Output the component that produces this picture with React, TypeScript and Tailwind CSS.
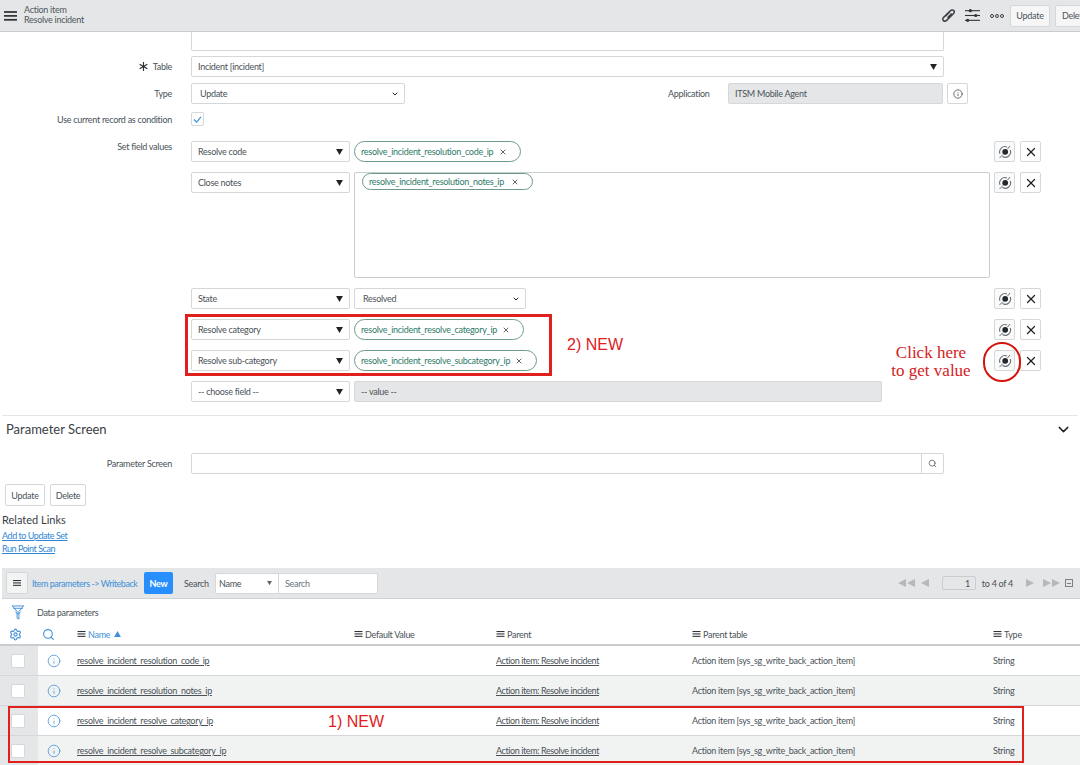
import React from "react";
import { ChevronDown, Info, Search, Settings, X } from "lucide-react";

const rows = [
  { name: "resolve_incident_resolution_code_ip", shade: false },
  { name: "resolve_incident_resolution_notes_ip", shade: true },
  { name: "resolve_incident_resolve_category_ip", shade: false },
  { name: "resolve_incident_resolve_subcategory_ip", shade: true },
];

const Burger = ({ className }: { className: string }) => (
  <svg viewBox="0 0 12 9" className={className} fill="currentColor">
    <rect width="12" height="1.6" />
    <rect y="3.6" width="12" height="1.6" />
    <rect y="7.2" width="12" height="1.6" />
  </svg>
);

const Caret = ({ className = "" }: { className?: string }) => (
  <svg viewBox="0 0 8 7" className={`w-[7px] h-[6px] text-[#222] ${className}`} fill="currentColor">
    <path d="M0 0h8L4 7z" />
  </svg>
);

// the "pick a value" icon on the right of each field row
const Target = () => (
  <svg viewBox="0 0 14 14" className="w-[14px] h-[14px] text-[#6a7076]" fill="none" stroke="currentColor">
    <circle cx="7.2" cy="6.800" r="2.900" fill="#23282c" stroke="none" />
    <path d="M12.200 5A5.300 5.300 0 0 1 4.500 11.500" strokeWidth="1.100" />
    <path d="M2 8.800A5.300 5.300 0 0 1 9 2" strokeWidth="1.100" />
    <path d="M1.500 13l3.500-3.500M9.500 4l2.500-3" strokeWidth="1" />
  </svg>
);

const FieldSelect = ({ label }: { label: string }) => (
  <div className="w-[159px] h-[21px] shrink-0 flex items-center justify-between pl-[6px] pr-[6px] border border-[#d5d8da] rounded-[2px] bg-white text-[#4a5258]">
    <span>{label}</span>
    <Caret />
  </div>
);

const Pill = ({ label, className = "h-[21px]" }: { label: string; className?: string }) => (
  <div className={`flex items-center pl-[6px] pr-[7px] border border-[#6d9a8c] rounded-full text-[#2f7a68] bg-white ${className}`}>
    <span className="flex-1 whitespace-nowrap">{label}</span>
    <X size={8} strokeWidth={2.5} className="mr-[6px] text-[#444]" />
  </div>
);

const RowButtons = () => (
  <div className="flex gap-[5px] shrink-0">
    <button className="w-[21px] h-[21px] flex items-center justify-center border border-[#d5d8da] rounded-[2px] bg-[#fafafa]">
      <Target />
    </button>
    <button className="w-[21px] h-[21px] flex items-center justify-center border border-[#d5d8da] rounded-[2px] bg-white">
      <X size={14} strokeWidth={2.2} className="text-[#222]" />
    </button>
  </div>
);

const Label = ({ children }: { children: React.ReactNode }) => (
  <div className="w-[172px] shrink-0 text-right text-[#4a5258]">{children}</div>
);

const SmallButton = ({ children, className = "" }: { children: React.ReactNode; className?: string }) => (
  <button className={`h-[22px] border border-[#d5d8da] rounded-[2px] bg-[#f6f6f6] text-[#4a5258] ${className}`}>
    {children}
  </button>
);

const FieldRow = ({ label, children, className = "" }: { label: string; children: React.ReactNode; className?: string }) => (
  <div className={`flex h-[21px] ml-[191px] w-[850px] ${className}`}>
    <FieldSelect label={label} />
    <div className="flex-1 ml-[4px]">{children}</div>
    <RowButtons />
  </div>
);

const App = () => {
  return (
    <div className="relative w-[1080px] h-[765px] overflow-hidden bg-white text-[9px] leading-none tracking-[-0.28px] font-['Lato',sans-serif]">
      {/* Header */}
      <div className="flex items-center h-[32px] bg-[#e4e6e7] border-b border-[#c9cdd0]">
        <Burger className="w-[13px] h-[10px] ml-[4px] text-[#2e3338]" />
        <div className="ml-[7px] pb-[2px] text-[#50585e] leading-[10px]">
          <div>Action item</div>
          <div>Resolve incident</div>
        </div>
        <div className="ml-auto flex items-center">
          <svg viewBox="0 0 16 16" className="w-[15px] h-[15px] text-[#3a4046]" fill="none" stroke="currentColor" strokeWidth="1.6">
            <path d="M14 3.500c-.6-1.500-2.600-2-4-.6L2.800 10c-1.300 1.300-1 2.800-.2 3.500s2.300.8 3.400-.3l7.400-7.400c.7-.7.9-1.700.6-2.800zM5 8.500l4.500-4.500M7 10.500l4.500-4.500" />
          </svg>
          <svg viewBox="0 0 14 13" className="w-[15px] h-[15px] ml-[9px] text-[#2e3338]" fill="currentColor">
            <rect y="1.500" width="14" height="1" />
            <circle cx="5" cy="2" r="1.500" />
            <rect y="6" width="14" height="1" />
            <circle cx="10" cy="6.500" r="1.500" />
            <rect y="10.500" width="14" height="1" />
            <circle cx="2.500" cy="11" r="1.500" />
          </svg>
          <div className="flex gap-[1px] ml-[10px]">
            <span className="w-[4px] h-[4px] rounded-full border border-[#3a4046]" />
            <span className="w-[4px] h-[4px] rounded-full border border-[#3a4046]" />
            <span className="w-[4px] h-[4px] rounded-full border border-[#3a4046]" />
          </div>
          <SmallButton className="w-[40px] ml-[6px]">Update</SmallButton>
          <SmallButton className="w-[40px] ml-[5px] text-left pl-[6px] mr-[-15px]">Delete</SmallButton>
        </div>
      </div>

      {/* Form */}
      <div className="ml-[191px] w-[753px] h-[19px] border border-t-0 border-[#d5d8da] rounded-b-[2px]" />
      <div className="flex items-center h-[21px] mt-[5px]">
        <Label>
          <span className="inline-flex items-center gap-[5px]">
            <svg viewBox="0 0 10 10" className="w-[9px] h-[9px] text-[#2e3338]" stroke="currentColor" strokeWidth="1.300">
              <path d="M5 0v10M.7 2.500l8.600 5M.7 7.500l8.600-5" />
            </svg>
            Table
          </span>
        </Label>
        <div className="ml-[19px] w-[753px] h-[21px] flex items-center justify-between px-[6px] border border-[#d5d8da] rounded-[2px] text-[#4a5258]">
          <span>Incident [incident]</span>
          <Caret />
        </div>
      </div>
      <div className="flex items-center h-[21px] mt-[6px]">
        <Label>Type</Label>
        <div className="ml-[19px] w-[214px] h-[21px] flex items-center justify-between pl-[8px] pr-[5px] border border-[#d5d8da] rounded-[2px] text-[#4a5258]">
          <span>Update</span>
          <ChevronDown size={8} strokeWidth={3} className="text-[#222]" />
        </div>
        <div className="ml-[263px] w-[60px] text-[#4a5258]">Application</div>
        <div className="w-[215px] h-[21px] flex items-center pl-[6px] border border-[#d5d8da] rounded-[2px] bg-[#e4e6e7] text-[#4a5258]">
          ITSM Mobile Agent
        </div>
        <div className="w-[21px] h-[21px] ml-[4px] flex items-center justify-center border border-[#d5d8da] rounded-[2px]">
          <Info size={10} className="text-[#50585e]" />
        </div>
      </div>
      <div className="flex items-center h-[14px] mt-[8px]">
        <Label>Use current record as condition</Label>
        <div className="ml-[19px] w-[13px] h-[14px] flex items-center justify-center border border-[#d5d8da] rounded-[2px]">
          <svg viewBox="0 0 10 8" className="w-[9px] h-[7px] text-[#3b8fdc]" fill="none" stroke="currentColor" strokeWidth="1.300">
            <path d="M1 4l3 3 5-6" />
          </svg>
        </div>
      </div>

      <div className="relative mt-[15px]">
        <div className="absolute left-0 top-[1px]">
          <Label>Set field values</Label>
        </div>
        <FieldRow label="Resolve code">
          <Pill label="resolve_incident_resolution_code_ip" className="w-[167px] h-[21px]" />
        </FieldRow>
        <div className="flex h-[106px] ml-[191px] w-[850px] mt-[10px]">
          <FieldSelect label="Close notes" />
          <div className="flex-1 ml-[4px] border border-[#c9cdd0] rounded-[2px] pl-[7px]">
            <Pill label="resolve_incident_resolution_notes_ip" className="w-[171px] h-[17px]" />
          </div>
          <div className="ml-[4px]">
            <RowButtons />
          </div>
        </div>
        <FieldRow label="State" className="mt-[10px]">
          <div className="w-[172px] h-[21px] flex items-center justify-between pl-[8px] pr-[5px] border border-[#d5d8da] rounded-[2px] text-[#4a5258]">
            <span>Resolved</span>
            <ChevronDown size={8} strokeWidth={3} className="text-[#222]" />
          </div>
        </FieldRow>
        <FieldRow label="Resolve category" className="mt-[10px]">
          <Pill label="resolve_incident_resolve_category_ip" className="w-[170px] h-[21px]" />
        </FieldRow>
        <FieldRow label="Resolve sub-category" className="mt-[10px]">
          <Pill label="resolve_incident_resolve_subcategory_ip" className="w-[183px] h-[21px]" />
        </FieldRow>
        <div className="flex h-[21px] ml-[191px] mt-[10px]">
          <FieldSelect label="-- choose field --" />
          <div className="w-[528px] ml-[4px] flex items-center pl-[6px] border border-[#d5d8da] rounded-[2px] bg-[#e4e6e7] text-[#4a5258]">
            -- value --
          </div>
        </div>
      </div>

      {/* Parameter Screen */}
      <div className="mx-[2px] mt-[13px] border-t border-[#e4e6e7] flex items-center justify-between h-[29px] pb-[2px] pl-[4px] pr-[6px]">
        <span className="text-[13px] tracking-normal text-[#3a4046]">Parameter Screen</span>
        <ChevronDown size={17} strokeWidth={2} className="text-[#222]" />
      </div>
      <div className="flex items-center h-[21px] mt-[9px]">
        <Label>Parameter Screen</Label>
        <div className="ml-[19px] w-[753px] h-[21px] flex justify-end border border-[#d5d8da] rounded-[2px]">
          <div className="w-[22px] flex items-center justify-center border-l border-[#d5d8da]">
            <Search size={9} className="text-[#50585e]" />
          </div>
        </div>
      </div>
      <div className="flex gap-[5px] ml-[5px] mt-[10px]">
        <SmallButton className="w-[40px] bg-white">Update</SmallButton>
        <SmallButton className="w-[36px] bg-white">Delete</SmallButton>
      </div>
      <div className="ml-[2px] mt-[8px] text-[11px] tracking-normal text-[#3a4046]">Related Links</div>
      <div className="ml-[2px] mt-[6px] tracking-[-0.45px] text-[#2f86d6] underline">Add to Update Set</div>
      <div className="ml-[2px] mt-[4px] tracking-[-0.45px] text-[#2f86d6] underline">Run Point Scan</div>

      {/* List toolbar */}
      <div className="flex items-center h-[31px] ml-[2px] mt-[15px] bg-[#e4e6e7] border-b border-[#d0d3d6]">
        <button className="w-[22px] h-[22px] ml-[4px] flex items-center justify-center border border-[#d5d8da] rounded-[2px] bg-[#f2f3f3]">
          <Burger className="w-[8px] h-[6px] text-[#2e3338]" />
        </button>
        <span className="ml-[4px] w-[106px] whitespace-nowrap tracking-[-0.46px] text-[#3f8fd8]">Item parameters -&gt; Writeback</span>
        <button className="ml-[6px] w-[29px] h-[22px] rounded-[2px] bg-[#278efc] text-white font-bold">New</button>
        <span className="ml-[11px] w-[26px] text-[#4a5258]">Search</span>
        <div className="ml-[5px] flex h-[21px] w-[163px] border border-[#d5d8da] rounded-[2px] bg-white text-[#4a5258]">
          <div className="w-[63px] flex items-center justify-between pl-[3px] pr-[5px] border-r border-[#d5d8da]">
            <span>Name</span>
            <Caret className="scale-75 text-[#666]" />
          </div>
          <div className="flex items-center pl-[6px] text-[#6b7276]">Search</div>
        </div>
        <div className="ml-auto flex items-center text-[#b4b9bc]">
          <svg viewBox="0 0 18 8" className="w-[18px] h-[8px]" fill="currentColor">
            <path d="M9 0v8L1 4zM18 0v8l-8-4z" />
          </svg>
          <svg viewBox="0 0 8 8" className="w-[8px] h-[8px] ml-[6px]" fill="currentColor">
            <path d="M8 0v8L0 4z" />
          </svg>
          <div className="w-[34px] h-[14px] ml-[13px] flex items-center justify-end pr-[5px] border border-[#c9cdd0] rounded-[2px] text-[#4a5258]">1</div>
          <span className="ml-[6px] text-[#4a5258]">to 4 of 4</span>
          <svg viewBox="0 0 8 8" className="w-[8px] h-[8px] ml-[13px]" fill="currentColor">
            <path d="M0 0v8l8-4z" />
          </svg>
          <svg viewBox="0 0 18 8" className="w-[18px] h-[8px] ml-[9px]" fill="currentColor">
            <path d="M0 0v8l8-4zM9 0v8l8-4z" />
          </svg>
          <div className="w-[8px] h-[8px] ml-[4px] mr-[7px] border border-[#7a8186] flex items-center justify-center">
            <span className="w-[4px] h-px bg-[#7a8186]" />
          </div>
        </div>
      </div>

      {/* Data parameters list */}
      <div className="flex items-center h-[25px] pt-[2px] ml-[11px]">
        <svg viewBox="0 0 14 16" className="w-[14px] h-[15px] text-[#3f8fd8]" fill="none" stroke="currentColor" strokeWidth="1">
          <path d="M.5 1h13M2 3.500h10M4 7l3 3 3-3M1 1l5 6v7l2 1V7l5-6" />
        </svg>
        <span className="ml-[12px] text-[#4a5258]">Data parameters</span>
      </div>
      <div className="grid grid-cols-[38px_39px_277px_142px_196px_301px_1fr] items-center h-[22px] border-b-2 border-[#c9cdd0] text-[#4a5258]">
        <Settings size={13} className="ml-[9px] text-[#3f8fd8]" />
        <Search size={13} className="ml-[4px] text-[#3f8fd8]" />
        <div className="flex items-center gap-[2px] text-[#3f8fd8]">
          <Burger className="w-[9px] h-[6px] text-[#2e3338]" />
          <span>Name</span>
          <svg viewBox="0 0 8 7" className="w-[7px] h-[6px] ml-[2px]" fill="currentColor">
            <path d="M0 7h8L4 0z" />
          </svg>
        </div>
        {["Default Value", "Parent", "Parent table", "Type"].map((h) => (
          <div key={h} className="flex items-center gap-[2px]">
            <Burger className="w-[9px] h-[6px] text-[#2e3338]" />
            <span>{h}</span>
          </div>
        ))}
      </div>
      {rows.map((r) => (
        <div
          key={r.name}
          className={`grid grid-cols-[38px_39px_277px_142px_196px_301px_1fr] items-center h-[30px] border-b border-[#d5d8da] text-[#4a5258] ${r.shade ? "bg-[#f1f2f2]" : "bg-white"}`}
        >
          <div className="h-full flex items-center bg-[#e4e6e7]">
            <div className="w-[14px] h-[14px] ml-[11px] bg-white border border-[#d5d8da] rounded-[2px]" />
          </div>
          <Info size={14} strokeWidth={1.300} className="ml-[9px] text-[#3f8fd8]" />
          <span className="underline">{r.name}</span>
          <span />
          <span className="underline tracking-[-0.4px]">Action item: Resolve incident</span>
          <span>Action item [sys_sg_write_back_action_item]</span>
          <span>String</span>
        </div>
      ))}

      {/* Red annotations drawn over the screenshot */}
      <div className="absolute left-[185px] top-[314px] w-[367px] h-[62px] border-[3px] border-[#e0201c]" />
      <div className="absolute left-[567px] top-[336px] text-[16px] tracking-normal leading-[18px] text-[#e0201c] font-['Liberation_Sans',sans-serif]">2) NEW</div>
      <div className="absolute left-[881px] top-[344px] w-[100px] text-center text-[17px] tracking-normal leading-[18px] text-[#d4211d] font-['Liberation_Serif',serif]">
        Click here
        <br />
        to get value
      </div>
      <div className="absolute left-[983px] top-[342px] w-[38px] h-[40px] rounded-full border-2 border-[#d4140f]" />
      <div className="absolute left-[8px] top-[706px] w-[1016px] h-[57px] border-2 border-[#e0201c]" />
      <div className="absolute left-[328px] top-[713px] text-[16px] tracking-normal leading-[18px] text-[#e0201c] font-['Liberation_Sans',sans-serif]">1) NEW</div>
    </div>
  );
};

export default App;
